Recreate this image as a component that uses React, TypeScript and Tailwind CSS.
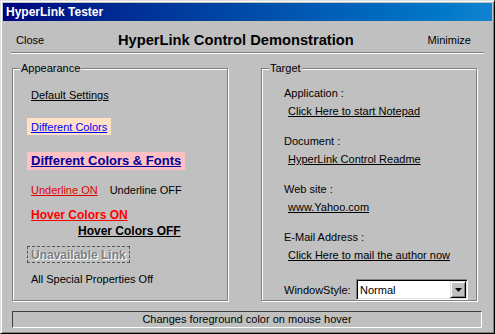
import React from 'react'

const etched = 'relative border border-[#808080] shadow-[inset_1px_1px_#fff,1px_1px_#fff]'

function Group({ label, children }: { label: string; children: React.ReactNode }) {
  return (
    <div className={`${etched} h-[233px] w-[216px]`}>
      <span className="absolute left-[7px] top-[-7px] bg-[#c0c0c0] px-[1px] text-[11px] leading-[13px] text-black">
        {label}
      </span>
      {children}
    </div>
  )
}

function Row({ className = '', children }: { className?: string; children: React.ReactNode }) {
  return <div className={`flex h-[14px] items-center text-[11px] leading-[14px] ${className}`}>{children}</div>
}

export default function App() {
  return (
    <div className="flex h-[334px] w-[495px] flex-col border border-[#dfdfdf] border-b-black border-r-black bg-[#c0c0c0] p-[2px] font-['Liberation_Sans',Arial,sans-serif] text-black shadow-[inset_1px_1px_#fff,inset_-1px_-1px_#808080]">
      {/* title bar */}
      <div className="flex h-[18px] items-center bg-gradient-to-r from-[#000080] to-[#1084d0] pl-[3px]">
        <span className="text-[12px] font-bold leading-[14px] text-white">HyperLink Tester</span>
      </div>

      {/* header */}
      <div className="flex h-[31px] items-center pl-[13px] pr-[21px] pt-[7px]">
        <span className="text-[11px] leading-[13px]">Close</span>
        <span className="flex-1 text-center text-[14.7px] font-bold leading-[17px]">HyperLink Control Demonstration</span>
        <span className="text-[11px] leading-[13px]">Minimize</span>
      </div>
      <div className="mx-[8px] h-[2px] border-b border-t border-b-white border-t-[#808080]" />

      {/* groups */}
      <div className="mt-[14px] flex gap-[33px] pl-[9px]">
        <Group label="Appearance">
          <div className="flex flex-col items-start pl-[18px] pt-[19px]">
            <Row>
              <span className="underline">Default Settings</span>
            </Row>
            <div className="-ml-[4px] mt-[16px] flex h-[17px] items-center bg-[#ffe2c6] px-[4px] text-[11px] leading-[14px]">
              <span className="text-[#0000ff] underline">Different Colors</span>
            </div>
            <div className="-ml-[4px] mt-[17px] flex h-[18px] items-center bg-[#ffc0c4] px-[4px] text-[13px] font-bold leading-[16px]">
              <span className="text-[#000099] underline">Different Colors &amp; Fonts</span>
            </div>
            <Row className="mt-[13px]">
              <span className="text-[#e00000] underline">Underline ON</span>
              <span className="ml-[12px]">Underline OFF</span>
            </Row>
            <div className="mt-[11px] flex h-[14px] items-center text-[12px] font-bold leading-[14px]">
              <span className="text-[#ff0000] underline">Hover Colors ON</span>
            </div>
            <div className="ml-[47px] mt-[2px] flex h-[14px] items-center text-[12px] font-bold leading-[14px]">
              <span className="underline">Hover Colors OFF</span>
            </div>
            <div className="-ml-[4px] mt-[8px] flex h-[17px] items-center border border-dashed border-[#555] px-[3px] text-[12px] font-bold leading-[14px]">
              <span className="text-[#808080] [text-shadow:1px_1px_#fff]">Unavailable Link</span>
            </div>
            <Row className="mt-[9px]">
              <span>All Special Properties Off</span>
            </Row>
          </div>
        </Group>

        <Group label="Target">
          <div className="flex flex-col items-start pl-[22px] pt-[17px]">
            <Row>Application :</Row>
            <Row className="ml-[4px] mt-[4px]">
              <span className="underline">Click Here to start Notepad</span>
            </Row>
            <Row className="mt-[16px]">Document :</Row>
            <Row className="ml-[4px] mt-[4px]">
              <span className="underline">HyperLink Control Readme</span>
            </Row>
            <Row className="mt-[16px]">Web site :</Row>
            <Row className="ml-[4px] mt-[4px]">
              <span className="underline">www.Yahoo.com</span>
            </Row>
            <Row className="mt-[16px]">E-Mail Address :</Row>
            <Row className="ml-[4px] mt-[4px]">
              <span className="underline">Click Here to mail the author now</span>
            </Row>
            <div className="mt-[17px] flex h-[21px] items-center text-[11px] leading-[14px]">
              <span className="w-[72px]">WindowStyle:</span>
              <div className="flex h-[21px] w-[112px] items-center border border-b-white border-l-[#808080] border-r-white border-t-[#808080] bg-white shadow-[inset_1px_1px_#000,inset_-1px_-1px_#dfdfdf]">
                <span className="flex-1 pl-[3px]">Normal</span>
                <div className="mr-[1px] flex h-[17px] w-[16px] items-center justify-center border border-[#dfdfdf] border-b-black border-r-black bg-[#c0c0c0] shadow-[inset_1px_1px_#fff,inset_-1px_-1px_#808080]">
                  <svg width="7" height="4" viewBox="0 0 7 4">
                    <path d="M0 0h7L3.5 4z" fill="#000" />
                  </svg>
                </div>
              </div>
            </div>
          </div>
        </Group>
      </div>

      {/* status bar */}
      <div className="ml-[9px] mt-[10px] flex h-[17px] w-[470px] items-center justify-center border border-b-white border-l-[#404040] border-r-white border-t-[#404040] text-[11px] leading-[13px]">
        Changes foreground color on mouse hover
      </div>
    </div>
  )
}
